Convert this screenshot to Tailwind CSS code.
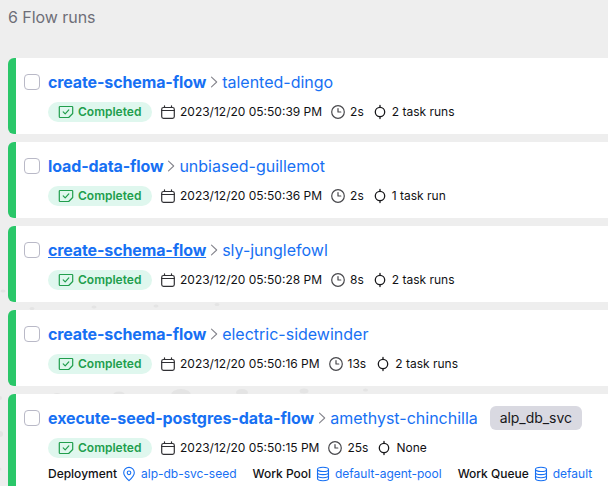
<!DOCTYPE html>
<html lang="en">
<head>
<meta charset="utf-8">
<title>Flow runs</title>
<script src="https://cdn.jsdelivr.net/npm/@tailwindcss/browser@4"></script>
</head>
<body class="relative h-[486px] w-[608px] overflow-hidden bg-[#eeeeee] font-['Inter',sans-serif] text-[#111114]">
<svg class="hidden">
  <symbol id="state" viewBox="0 0 16 14" fill="none" stroke="currentColor" stroke-width="1.2" stroke-linecap="round" stroke-linejoin="round"><path d="M2 1.5h12a.7.7 0 0 1 .7.7v6.3l-4 4H2a.7.7 0 0 1-.7-.7V2.2a.7.7 0 0 1 .7-.7Z"/><path d="m5.2 6.9 2 2 3.6-4"/></symbol>
  <symbol id="cal" viewBox="0 0 16 16" fill="none" stroke="currentColor" stroke-width="1.2" stroke-linecap="round"><rect x="1.7" y="3.5" width="12.6" height="10.9" rx="1.8"/><path d="M1.7 6.5h12.6M4.5 1.8v1.5M11.5 1.8v1.5"/></symbol>
  <symbol id="clock" viewBox="0 0 16 16" fill="none" stroke="currentColor" stroke-width="1.2" stroke-linecap="round" stroke-linejoin="round"><circle cx="8" cy="8" r="6.3"/><path d="M8 4.5V8h2.8"/></symbol>
  <symbol id="task" viewBox="0 0 16 16" fill="none" stroke="currentColor" stroke-width="1.3" stroke-linecap="round"><circle cx="8" cy="8" r="4.7"/><path d="M8 1.4v1.9M8 12.7v1.9"/></symbol>
  <symbol id="chev" viewBox="0 0 8 12" fill="none" stroke="currentColor" stroke-width="1.1" stroke-linecap="round" stroke-linejoin="round"><path d="m1.5 1.2 5.2 4.8-5.2 4.8"/></symbol>
  <symbol id="pin" viewBox="0 0 14 16" fill="none" stroke="currentColor" stroke-width="1.1" stroke-linejoin="round"><path d="M7 14.6C4.8 12.6 1.7 9.8 1.7 6.7a5.3 5.3 0 0 1 10.6 0c0 3.1-3.1 5.9-5.3 7.9Z"/><circle cx="7" cy="6.8" r="1.8"/></symbol>
  <symbol id="db" viewBox="0 0 14 16" fill="none" stroke="currentColor" stroke-width="1.1"><ellipse cx="7" cy="3.4" rx="5.5" ry="2.1"/><path d="M1.5 3.4v9.2c0 1.2 2.5 2.1 5.5 2.1s5.5-.9 5.5-2.1V3.4M1.5 6.5c0 1.2 2.5 2.1 5.5 2.1s5.5-.9 5.5-2.1M1.5 9.6c0 1.2 2.5 2.1 5.5 2.1s5.5-.9 5.5-2.1"/></symbol>
</svg>

<!-- Faint scatter plot dots behind the list -->
<svg class="absolute inset-0" width="608" height="486" fill="#e4e4e4">
  <ellipse cx="3" cy="291" rx="2.5" ry="1.5"/><ellipse cx="32" cy="308.5" rx="2.5" ry="1.5"/><ellipse cx="94" cy="307" rx="2.5" ry="1.5"/><ellipse cx="156" cy="306" rx="2.5" ry="1.5"/><ellipse cx="217" cy="304.5" rx="2.5" ry="1.5"/>
  <ellipse cx="57" cy="396" rx="5" ry="3"/><ellipse cx="119" cy="395" rx="6" ry="3.5"/><ellipse cx="181" cy="395" rx="10" ry="6"/><ellipse cx="242" cy="392.5" rx="6" ry="3.5"/><ellipse cx="304" cy="391" rx="4.5" ry="2.5"/><ellipse cx="365.5" cy="390" rx="2.5" ry="1.5"/>
  <circle cx="0" cy="398" r="2"/><circle cx="0" cy="434" r="3"/><circle cx="0" cy="469" r="1.5"/>
</svg>

<main id="list" class="relative flex flex-col gap-2 pl-2">
  <h1 class="mb-[15px] h-[35px] pt-[5px] text-[16px] leading-6 tracking-[-0.05px] text-[#6e6e78]">6 Flow runs</h1>
</main>

<script>
const runs = [
  ['create-schema-flow', 'talented-dingo', '39', '2s', '2 task runs'],
  ['load-data-flow', 'unbiased-guillemot', '36', '2s', '1 task run'],
  ['create-schema-flow', 'sly-junglefowl', '28', '8s', '2 task runs', true],
  ['create-schema-flow', 'electric-sidewinder', '16', '13s', '2 task runs'],
  ['execute-seed-postgres-data-flow', 'amethyst-chinchilla', '15', '25s', 'None', false, true]
];
const tag = '<span class="ml-3 flex h-6 w-[92px] items-center justify-center rounded-md bg-[#d9d9e1] text-[14px] tracking-[-0.04px] text-[#18181b]">alp_db_svc</span>';
const link = (label, icon, name) => `<span class="flex items-center"><span class="font-medium">${label}</span><svg class="mr-[5px] ml-[5px] h-4 w-[14px] text-[#1770f3]"><use href="#${icon}"/></svg><span class="text-[#1770f3]">${name}</span></span>`;
const details = `<div class="mt-2 flex h-4 items-center gap-4 text-[12px] leading-4 tracking-[-0.008px]">${link('Deployment', 'pin', 'alp-db-svc-seed')}${link('Work Pool', 'db', 'default-agent-pool')}${link('Work Queue', 'db', 'default')}</div>`;
document.getElementById('list').insertAdjacentHTML('beforeend', runs.map(([flow, run, sec, dur, tasks, hover, extra]) => `
<article class="flex shrink-0 rounded-l-md border-l-8 border-[#2ac769] bg-white py-3 pl-2 whitespace-nowrap ${extra ? 'h-[100px]' : 'h-[76px]'}">
  <span class="mt-1 mr-2 h-4 w-4 shrink-0 rounded border border-[#b9b9c7] bg-white"></span>
  <div>
    <div class="flex h-6 items-center text-[16px] leading-6 text-[#1770f3]">
      <a class="font-bold ${extra ? 'tracking-[-0.065px]' : 'tracking-[-0.125px]'} ${hover ? 'underline' : ''}">${flow}</a>
      <svg class="mx-1 h-3 w-2 text-[#85858d]"><use href="#chev"/></svg>
      <a>${run}</a>${extra ? tag : ''}
    </div>
    <div class="mt-2 flex h-5 items-center text-[12px] leading-4">
      <span class="mr-2 flex h-5 w-[104px] items-center rounded-full bg-[#dff7ee] pl-2.5 font-semibold text-[#219e4d]"><svg class="mr-1 h-[14px] w-4"><use href="#state"/></svg>Completed</span>
      <svg class="mr-1 h-4 w-4 text-[#303034]"><use href="#cal"/></svg><span>2023/12/20 05:50:${sec} PM</span>
      <svg class="mr-1 ml-2 h-4 w-4 text-[#48484c]"><use href="#clock"/></svg><span class="${dur === '13s' ? 'pr-px' : ''}">${dur}</span>
      <svg class="mr-1 ml-2 h-4 w-4 text-[#18181b]"><use href="#task"/></svg><span>${tasks}</span>
    </div>
    ${extra ? details : ''}
  </div>
</article>`).join(''));
</script>
</body>
</html>
